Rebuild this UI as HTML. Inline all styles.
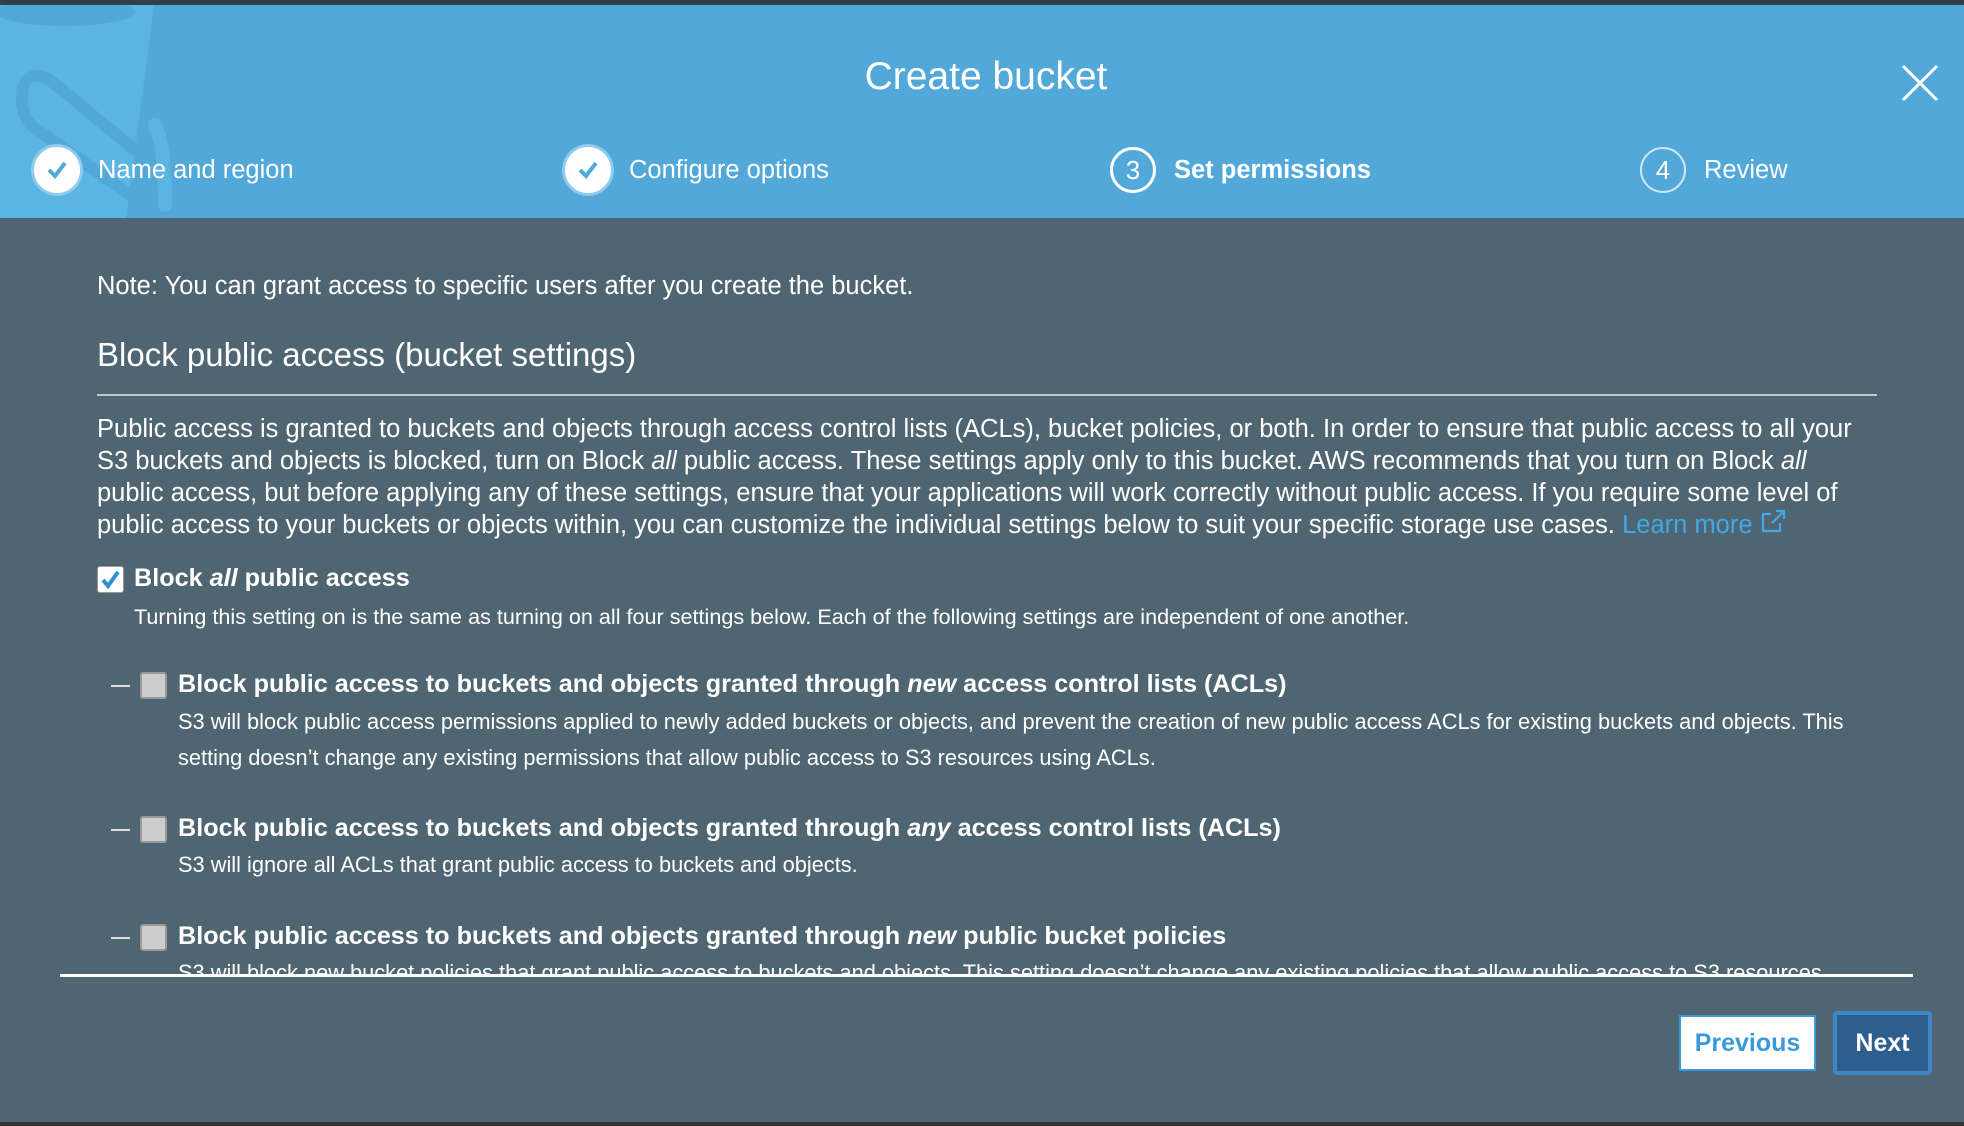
<!DOCTYPE html>
<html><head><meta charset="utf-8"><style>
*{margin:0;padding:0;box-sizing:border-box}
body{width:1964px;height:1126px;overflow:hidden;background:#4f6672;font-family:"Liberation Sans",Arial,sans-serif;color:#fff;position:relative}
.top{position:absolute;left:0;top:0;width:1964px;height:5px;background:#323f4a}
.bot{position:absolute;left:0;bottom:0;width:1964px;height:4px;background:#333}
.hdr{position:absolute;left:0;top:5px;width:1964px;height:213px;background:#52a9d9;overflow:hidden}
.title{position:absolute;top:50px;left:0;width:1972px;text-align:center;font-size:39px}
.x{position:absolute;left:1900px;top:58px}
.step{position:absolute;top:142px;height:46px;display:flex;align-items:center;font-size:25.5px}
.circ{width:46px;height:46px;border-radius:50%;border:2px solid #fff;display:flex;align-items:center;justify-content:center;margin-right:18px;font-size:26px}
.ab{position:absolute;white-space:nowrap}
.cb{position:absolute;width:27px;height:27px;border-radius:3px}
</style></head><body>
<div class="top"></div>
<div class="hdr">
<svg width="260" height="213" style="position:absolute;left:0;top:0">
<path d="M0 0 L154 0 L126 213 L0 213 Z" fill="#5bb5e3"/>
<ellipse cx="65" cy="7" rx="70" ry="14" fill="#52a9d9"/>
<path d="M135 145 L50 75 Q20 60 22 100 Q25 120 45 130 L130 190" stroke="#52a9d9" stroke-width="12" fill="none" stroke-linecap="round"/>
<path d="M155 120 Q165 140 165 200" stroke="#5bb5e3" stroke-width="14" fill="none" stroke-linecap="round"/>
</svg>
<div class="title">Create bucket</div>
<svg class="x" width="40" height="40" viewBox="0 0 40 40"><path d="M3 3L37 37M37 3L3 37" stroke="#fff" stroke-width="3"/></svg>
</div>
<div class="step" style="left:34px;top:147px"><div class="circ" style="background:#fff;box-shadow:0 0 0 3px #8fcbeb"><svg width="24" height="20"><path d="M4 10L10 16L20 3" stroke="#52a9d9" stroke-width="4" fill="none"/></svg></div>Name and region</div>
<div class="step" style="left:565px;top:147px"><div class="circ" style="background:#fff;box-shadow:0 0 0 3px #8fcbeb"><svg width="24" height="20"><path d="M4 10L10 16L20 3" stroke="#52a9d9" stroke-width="4" fill="none"/></svg></div>Configure options</div>
<div class="step" style="left:1110px;top:147px;font-weight:bold"><div class="circ" style="border-width:3px;font-weight:normal">3</div>Set permissions</div>
<div class="step" style="left:1640px;top:147px"><div class="circ" style="border-color:#cfe6f4">4</div>Review</div>

<div class="ab" style="left:97px;top:272px;font-size:25.5px">Note: You can grant access to specific users after you create the bucket.</div>
<div class="ab" style="left:97px;top:336px;font-size:33px">Block public access (bucket settings)</div>
<div class="ab" style="left:97px;top:394px;width:1780px;height:2px;background:#c0c8cc"></div>
<div class="ab" style="left:97px;top:413px;width:1772px;font-size:25.5px;line-height:32px;white-space:normal">Public access is granted to buckets and objects through access control lists (ACLs), bucket policies, or both. In order to ensure that public access to all your S3 buckets and objects is blocked, turn on Block <i>all</i> public access. These settings apply only to this bucket. AWS recommends that you turn on Block <i>all</i> public access, but before applying any of these settings, ensure that your applications will work correctly without public access. If you require some level of public access to your buckets or objects within, you can customize the individual settings below to suit your specific storage use cases. <span style="color:#3fa9e6">Learn more <svg width="26" height="24" viewBox="0 0 26 24"><path d="M16 2H24V10M24 2L12 14M20 14V22H3V5H11" stroke="#3fa9e6" stroke-width="2.2" fill="none"/></svg></span></div>

<div class="cb" style="left:97px;top:566px;background:#fff;border:1px solid #999"><svg width="25" height="25"><path d="M5 13L10 19L20 5" stroke="#2e8fd6" stroke-width="4" fill="none"/></svg></div>
<div class="ab" style="left:134px;top:564px;font-size:25.2px;font-weight:bold">Block <i>all</i> public access</div>
<div class="ab" style="left:134px;top:604px;font-size:21.6px">Turning this setting on is the same as turning on all four settings below. Each of the following settings are independent of one another.</div>

<div style="position:absolute;left:0;top:640px;width:1964px;height:335px;overflow:hidden">
<div class="ab" style="left:111px;top:45px;width:19px;height:2px;background:#ddd"></div>
<div class="cb" style="left:140px;top:32px;background:#ccc;border:2px solid #999"></div>
<div class="ab" style="left:178px;top:30px;font-size:25.2px;font-weight:bold">Block public access to buckets and objects granted through <i>new</i> access control lists (ACLs)</div>
<div class="ab" style="left:178px;top:64px;font-size:21.8px;line-height:36px">S3 will block public access permissions applied to newly added buckets or objects, and prevent the creation of new public access ACLs for existing buckets and objects. This<br>setting doesn’t change any existing permissions that allow public access to S3 resources using ACLs.</div>
<div class="ab" style="left:111px;top:189px;width:19px;height:2px;background:#ddd"></div>
<div class="cb" style="left:140px;top:176px;background:#ccc;border:2px solid #999"></div>
<div class="ab" style="left:178px;top:174px;font-size:25.2px;font-weight:bold">Block public access to buckets and objects granted through <i>any</i> access control lists (ACLs)</div>
<div class="ab" style="left:178px;top:212px;font-size:21.8px">S3 will ignore all ACLs that grant public access to buckets and objects.</div>
<div class="ab" style="left:111px;top:297px;width:19px;height:2px;background:#ddd"></div>
<div class="cb" style="left:140px;top:284px;background:#ccc;border:2px solid #999"></div>
<div class="ab" style="left:178px;top:282px;font-size:25.2px;font-weight:bold">Block public access to buckets and objects granted through <i>new</i> public bucket policies</div>
<div class="ab" style="left:178px;top:320px;font-size:21.8px">S3 will block new bucket policies that grant public access to buckets and objects. This setting doesn’t change any existing policies that allow public access to S3 resources.</div>
</div>
<div class="ab" style="left:60px;top:974px;width:1853px;height:3px;background:#fff"></div>

<div class="ab" style="left:1679px;top:1015px;width:137px;height:56px;background:#fff;border:2px solid #3a9ad9;color:#3a9ad9;font-size:25px;font-weight:bold;display:flex;align-items:center;justify-content:center">Previous</div>
<div class="ab" style="left:1833px;top:1011px;width:99px;height:64px;background:#2d5e8e;border:4px solid #3d87c9;border-radius:4px;font-size:25px;font-weight:bold;display:flex;align-items:center;justify-content:center">Next</div>
<div class="bot"></div>
</body></html>
